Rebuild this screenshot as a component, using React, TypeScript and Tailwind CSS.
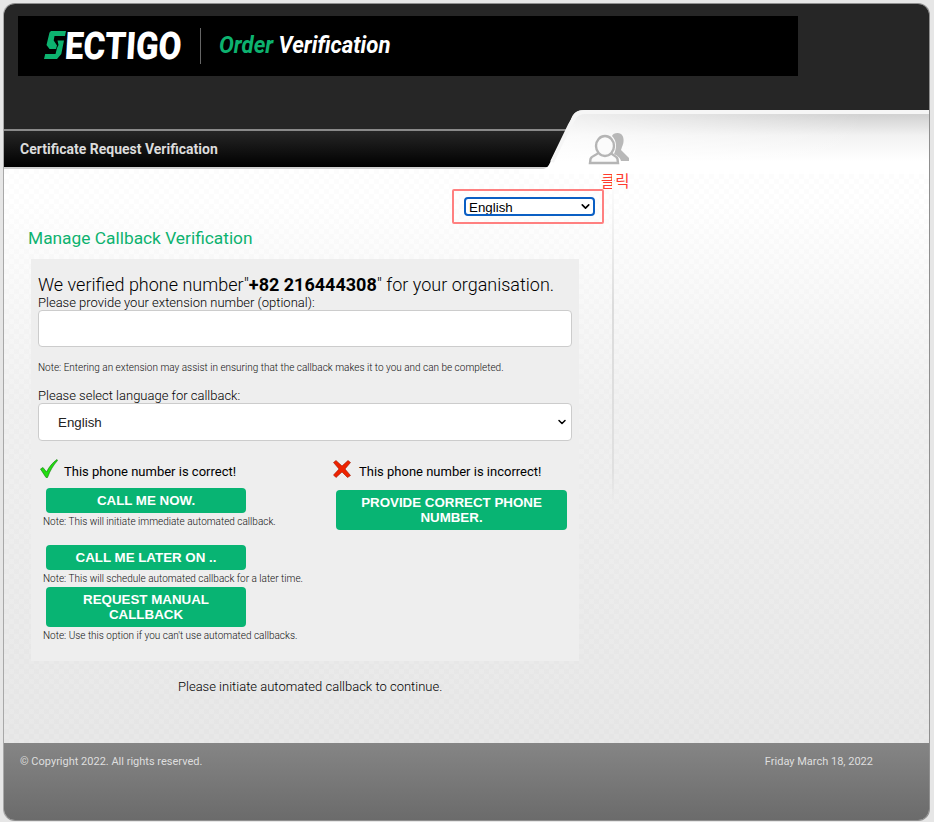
import { ChevronDown } from "lucide-react";

const GreenButton = ({ label, className }: { label: string; className: string }) => (
  <button className={`block rounded-[4px] bg-[#08b473] px-3 text-center font-['Liberation_Sans',sans-serif] text-[13.33px] leading-[15px] font-bold text-white ${className}`}>
    {label}
  </button>
);

const Note = ({ children }: { children: string }) => (
  <p className="mt-[3px] ml-[5px] text-[10px] leading-[12px] font-light text-[#111]">{children}</p>
);

const Logo = () => (
  <div className="flex h-[60px] w-[780px] items-center bg-black pl-[26px]">
    <svg width="22" height="28" viewBox="0 0 22 28" className="mt-[-2px] shrink-0" aria-hidden="true">
      <path fill="#0db26f" d="M5.5 1.5 7 0H22L21 5H10.5L9.7 9.5 13 14.5 12 18H5.5L2.5 14Z" />
      <path fill="#0db26f" d="M13.5 9.5H20L17.3 23 13 28H0L1.2 23H11.5L13 17 14.5 14Z" />
    </svg>
    <span className="-ml-[1px] w-[117px] origin-left scale-x-[0.875] -skew-x-[4deg] text-[38px] leading-none font-black whitespace-nowrap text-white">
      ECTIGO
    </span>
    <div className="mx-[18px] h-[36px] w-px bg-[#666]" />
    <span className="-mt-[2px] origin-left scale-x-[0.925] text-[24px] font-bold whitespace-nowrap text-white italic">
      <span className="text-[#0db26f]">Order</span> Verification
    </span>
  </div>
);

const TabCurve = () => (
  <svg className="absolute top-[106px] left-0" width="927" height="64" viewBox="0 0 927 64" aria-hidden="true">
    <defs>
      <linearGradient id="curveFill" x1="0" y1="0" x2="0" y2="1">
        <stop offset="0.08" stopColor="#d2d2d2" />
        <stop offset="0.4" stopColor="#f2f2f2" />
        <stop offset="0.8" stopColor="#ffffff" />
      </linearGradient>
      <linearGradient id="curveFade" x1="0" y1="0" x2="1" y2="0">
        <stop offset="0" stopColor="#ffffff" stopOpacity="0.75" />
        <stop offset="1" stopColor="#ffffff" stopOpacity="0" />
      </linearGradient>
    </defs>
    <path fill="url(#curveFill)" d="M520 59H538C542 59 544 57 546 53L564 17 568 7C570 3 573 0 580 0H927V64H520Z" />
    <path fill="url(#curveFade)" d="M520 59H538C542 59 544 57 546 53L564 17 568 7C570 3 573 0 580 0H860V64H520Z" />
    <path fill="none" stroke="#f6f6f6" strokeWidth="4" d="M548 52 566 15 570 8C572 4 575 2 581 2H927" />
  </svg>
);

const PersonIcon = () => (
  <svg className="absolute top-[126px] left-[581px]" width="46" height="36" viewBox="0 0 46 36" aria-hidden="true">
    <path fill="#b8b8b8" d="M27 6C28 3 33 2 36 4 39 6 39.5 12 37 17L36 20 44 28V31H36C35 27 31 25 29 24 32 18 32 11 27 6Z" />
    <path fill="#fbfbfb" stroke="#b5b5b5" strokeWidth="2.4" d="M13 23C12 25 6 26 5.5 29L5 33H33L32.5 29C32 26 27 25 26 23" />
    <ellipse cx="20" cy="16" rx="9" ry="10" fill="#fbfbfb" stroke="#b5b5b5" strokeWidth="2.4" />
  </svg>
);

const App = () => {
  return (
    <div className="h-[822px] w-[934px] overflow-hidden bg-[#e6e6e6] pt-[3px] pl-[3px] font-['Roboto',sans-serif] text-black">
      <div className="relative flex h-[818px] w-[927px] flex-col overflow-hidden rounded-[12px] border border-[#8f8f8f] border-l-[#a8a8a8] [background-image:repeating-conic-gradient(rgba(0,0,0,0.01)_0_25%,transparent_0_50%),linear-gradient(#ffffff_200px,#f1f1f1_400px,#e8e8e8_730px)] [background-size:10px_10px,100%_100%]">
        <header className="h-[125px] shrink-0 bg-[#262626] pt-[12px] pl-[14px]">
          <Logo />
        </header>
        <div className="h-[40px] shrink-0 border-t-2 border-b-2 border-t-[#8a8a8a] border-b-[#d0d0d0] bg-[linear-gradient(#262626,#000)] pt-[9px] pl-[16px] text-[14px] leading-[18px] font-bold text-[#dcdcdc]">
          Certificate Request Verification
        </div>
        <TabCurve />
        <PersonIcon />
        <span className="absolute top-[166px] left-[597px] font-['Noto_Sans_CJK_KR',sans-serif] text-[15.5px] leading-[20px] text-[#ff3b30]">
          클릭
        </span>
        <div className="absolute top-[170px] left-[608px] h-[330px] w-[2px] bg-[linear-gradient(#ffffff,#dcdcdc_40%,#e0e0e0_90%,transparent)]" />

        <main className="flex min-h-0 flex-1 flex-col">
          <div className="mt-[20px] ml-[448px] flex h-[35px] w-[152px] items-center rounded-[2px] border-2 border-[#ff8080] pl-[10px]">
            <div className="relative h-[19px] w-[131px] rounded-[4px] border-2 border-[#0a5fc4] bg-white">
              <select className="block h-[15px] w-full appearance-none bg-transparent pt-[2px] pl-[3px] font-['Liberation_Sans',sans-serif] text-[13.33px] leading-[13px] text-black outline-none" defaultValue="English">
                <option>English</option>
              </select>
              <ChevronDown className="pointer-events-none absolute top-[1px] right-[1px] size-[13px] stroke-[3]" />
            </div>
          </div>
          <h1 className="mt-[2px] ml-[24px] text-[17.33px] leading-[24px] font-normal text-[#0db26f]">Manage Callback Verification</h1>

          <section className="mt-[9px] ml-[27px] h-[402px] w-[548px] shrink-0 bg-[#eeeeee] px-[7px] pt-[16px]">
            <p className="text-[18px] leading-[20px] font-light whitespace-nowrap">
              We verified phone number"<b className="font-bold">+82 216444308</b>" for your organisation.
            </p>
            <label className="block text-[13px] leading-[16px] font-light text-black">Please provide your extension number (optional):</label>
            <input className="-mt-[1px] block h-[37px] w-[534px] rounded-[4px] border border-[#ccc] bg-white" />
            <p className="mt-[5px] text-[10px] leading-[32px] font-light text-[#111]">
              Note: Entering an extension may assist in ensuring that the callback makes it to you and can be completed.
            </p>
            <label className="mt-[4px] block text-[13px] leading-[16px] font-light text-black">Please select language for callback:</label>
            <div className="relative -mt-[1px] h-[38px] w-[534px]">
              <select className="h-full w-full appearance-none rounded-[4px] border border-[#ccc] bg-white pt-[2px] pl-[19px] font-['Liberation_Sans',sans-serif] text-[13.33px] text-[#222]" defaultValue="English">
                <option>English</option>
              </select>
              <ChevronDown className="pointer-events-none absolute top-[13px] right-[4px] size-[12px] stroke-[3]" />
            </div>

            <div className="mt-[19px] flex">
              <div className="w-[295px]">
                <div className="flex h-[22px] items-center text-[13px] font-normal text-black">
                  <svg width="18" height="19" viewBox="0 0 18 19" className="-mt-[5px] ml-[2px]" aria-hidden="true">
                    <path fill="#22dd11" stroke="#0a7a05" strokeWidth="0.6" d="M0.5 10 3 8.5 6.5 13C9 8 12.5 3.5 17 0.5L17.5 1.5C13.5 6 10 11.5 7.5 18.5H6Z" />
                  </svg>
                  <span className="ml-[6px] pt-[2px]">This phone number is correct!</span>
                </div>
                <GreenButton label="CALL ME NOW." className="mt-[6px] ml-[8px] h-[25px] w-[200px]" />
                <Note>Note: This will initiate immediate automated callback.</Note>
                <GreenButton label="CALL ME LATER ON .." className="mt-[17px] ml-[8px] h-[25px] w-[200px]" />
                <Note>Note: This will schedule automated callback for a later time.</Note>
                <GreenButton label="REQUEST MANUAL CALLBACK" className="mt-[2px] ml-[8px] h-[40px] w-[200px]" />
                <Note>Note: Use this option if you can't use automated callbacks.</Note>
              </div>
              <div>
                <div className="flex h-[22px] items-center text-[13px] font-normal text-black">
                  <svg width="18" height="18" viewBox="0 0 18 18" className="-mt-[5px]" aria-hidden="true">
                    <path fill="#ee2200" stroke="#a01800" strokeWidth="0.6" d="M0.5 2.5 3 0.5 9 6 15 0.5 17.5 2.5 12 9 17.5 15.5 14.5 17.5 9 12 3 17.5 0.5 15 6 9Z" />
                  </svg>
                  <span className="ml-[8px] pt-[2px]">This phone number is incorrect!</span>
                </div>
                <GreenButton label="PROVIDE CORRECT PHONE NUMBER." className="mt-[8px] ml-[3px] h-[40px] w-[231px]" />
              </div>
            </div>
          </section>

          <p className="mt-[18px] ml-[174px] text-[13px] leading-[16px] font-light text-black">Please initiate automated callback to continue.</p>
        </main>

        <footer className="flex h-[77px] shrink-0 justify-between bg-[linear-gradient(#858585,#6b6b6b)] pt-[12px] pr-[56px] pl-[16px] text-[11px] leading-[14px] text-[#dedede]">
          <span>© Copyright 2022. All rights reserved.</span>
          <span>Friday March 18, 2022</span>
        </footer>
      </div>
    </div>
  );
};

export default App;
